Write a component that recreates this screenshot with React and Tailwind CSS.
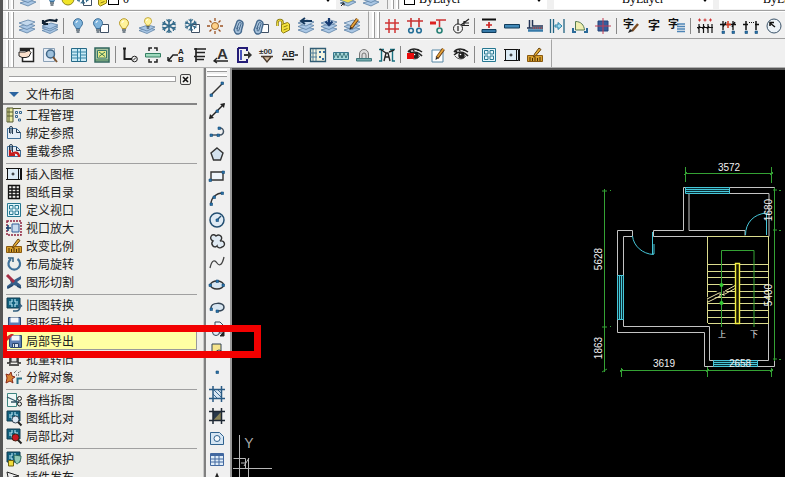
import React from "react";

const sheet = (y, f = "#a9c6e4") => (
  <path d={`M0 ${y} L9 ${y - 3} L16 ${y - 1} L8 ${y + 3}Z`} fill={f} stroke="#5d82a6" strokeWidth=".8" />
);
const sheets = (
  <>
    {sheet(12)}
    {sheet(8.5)}
    {sheet(5, "#c3d8ec")}
  </>
);
const lowSheets = (
  <>
    {sheet(12.5)}
    {sheet(10)}
  </>
);
const bulb = (f, s, cx = 8) => (
  <g transform={`translate(${cx - 8} 0)`}>
    <path d="M6 10.5C6 8.5 3.5 8 3.5 5.200a4.500 4.500 0 0 1 9 0C12.500 8 10 8.500 10 10.500Z" fill={f} stroke={s} />
    <path d="M6 12h4M6.500 14h3" stroke="#52616e" strokeWidth="1.6" />
    <path d="M6 5a2 2 0 0 1 2-2" stroke="#fff" />
  </g>
);
const page = <path d="M7.500 6.500h8v8h-8z" fill="#fff" stroke="#3f5064" />;
const flake = (
  <g stroke="#336a8a" strokeWidth="1.500">
    <path d="M8 1v14M1.500 4.500l13 7M1.500 11.500l13-7" />
    <path d="M5.500 1.500L8 4l2.500-2.500M5.500 14.500L8 12l2.500 2.500M1 7l3-1-.5-3M15 7l-3-1 .5-3M1 9l3 1-.5 3M15 9l-3 1 .5 3" strokeWidth="1.200" />
  </g>
);
const clipLock = (
  <g stroke="#466a8e">
    <path d="M4 12L7 3.500a3.500 3.500 0 0 1 6 3L11.500 12a3.500 3.500 0 0 1-7 1Z" fill="#a9c3dc" strokeWidth="1.400" />
    <path d="M6.500 11L9 5a1 1 0 0 1 2 1l-2 6a1 1 0 0 1-2 0l1-3" />
  </g>
);
const pen = (
  <g>
    <path d="M7 11L13.500 2" stroke="#6a3c12" strokeWidth="3.400" />
    <path d="M7.500 10L13.500 2" stroke="#e6a53c" strokeWidth="1.700" />
    <path d="M5.500 13l.5-3 2 1.500Z" fill="#222" />
  </g>
);
const eye = (
  <g>
    <path d="M1 5C4 1 10 1 15 5M1 8C5 4 11 4 15 9M2 4l2 1M6 2l1 2M11 2v2" stroke="#222" strokeWidth="1.500" />
    <path d="M2 9c3 4 9 4 11-.5" stroke="#555" />
    <circle cx="8.500" cy="8.500" r="3.200" fill="#222" />
    <circle cx="7.500" cy="7.500" r=".8" fill="#fff" />
  </g>
);
const ruler = (
  <g>
    <path d="M.5 8.500h15v6H.5z" fill="#d9a02c" stroke="#8a5a10" />
    <path d="M3 10v4M5.500 11v3M8 10v4M10.500 11v3M13 10v4" stroke="#4c3006" />
    <path d="M6.500 10l1-3L12 1l2 1.500L9 8.500Z" fill="#e4ad38" stroke="#68430d" />
  </g>
);
const views = (
  <g stroke="#267791">
    <path d="M1.500 1.500h13v13h-13z" fill="#e4f6fb" />
    <path d="M3.500 3.500h3.500v3.500h-3.500zM9 3.500h3.500v3.500H9zM3.500 9h3.500v3.500h-3.500zM9 9h3.500v3.500H9z" />
  </g>
);
const frame = (
  <g>
    <path d="M1.500 2.500h13v11h-13z" fill="#dcebf5" stroke="#111" />
    <path d="M12.500 2.500v11M0 2.500h3M0 13.500h3M15.500 2v12" stroke="#111" />
    <path d="M7 6.500v3M5.500 8h3" stroke="#111" />
  </g>
);
const blueBoard = (
  <g>
    <path d="M1 1h13v10H1z" fill="#10617f" stroke="#123c50" />
    <path d="M3 5h3V2M12 5H9V2M3 7h3v3M12 7H9v3" stroke="#c8f2ff" />
  </g>
);
const node = (x, y) => <path d={`M${x - 1} ${y - 1}h2.500v2.500h-2.500z`} fill="#2773ab" stroke="#174b75" strokeWidth=".6" />;
const cjk = (ch, x, y, s) => (
  <text x={x} y={y} fontSize={s} fill="#111" stroke="none" fontWeight="700" fontFamily="'Noto Sans CJK SC', sans-serif">{ch}</text>
);
const gridHooks = <path d="M4 0v16M12.500 0v16M0 3.500h16M0 12.500h16" strokeWidth="1.500" />;
const disk = (
  <g>
    <path d="M2.500 2.500h12v12h-11l-1-1z" fill="#5c7fb5" stroke="#29466f" />
    <path d="M4.500 2.500h8v5h-8z" fill="#f3f6fa" />
    <path d="M5.500 10.500h6v4h-6z" fill="#dde5ee" stroke="#29466f" />
    <path d="M7.500 11v3" stroke="#29466f" />
  </g>
);
const doc = <path d="M1.500 3.500h9l4 4v6h-13z" fill="#e3edf6" stroke="#3f6f98" />;
const clip = <path d="M3.500 8V3a1.500 1.500 0 0 1 3 0v6M3.500 7a1 1 0 0 0 1.500 1V4M10.500 4v3.500h4" stroke="#233a50" />;

const ART = {
  layers: sheets,
  layerPrev: <>{lowSheets}{sheet(8)}<path d="M1 6c3-5 8-4 13-3l1-2M1 6V2M1 6h5" stroke="#123" strokeWidth="2.200" /></>,
  bulb: bulb("#7fb4dc", "#3c6f99"),
  bulbPage: <>{page}{bulb("#7fb4dc", "#3c6f99", 5)}</>,
  bulbOn: bulb("#fff39a", "#b99b2a"),
  bulbLayers: <>{lowSheets}<g transform="translate(1 -1) scale(.8)">{bulb("#fff39a", "#b99b2a", 10)}</g></>,
  flake,
  flakePage: <>{page}<g transform="scale(.85)">{flake}</g></>,
  sun: <><circle cx="8" cy="8" r="3.500" fill="#ffd28a" stroke="#a0642a" /><path d="M8 0v3M8 13v3M0 8h3M13 8h3M2.500 2.500l2 2M11.500 11.500l2 2M2.500 13.500l2-2M11.500 4.500l2-2" stroke="#9c5325" strokeWidth="1.300" /></>,
  sunFull: <circle cx="8" cy="8" r="6" fill="#f0e428" stroke="#8e861c" />,
  lock: clipLock,
  lockPage: <>{page}<g transform="translate(-3)">{clipLock}</g></>,
  unlock: <g stroke="#8b7b10"><path d="M2.500 8V4.500a2.500 2.500 0 0 1 5 0V8" strokeWidth="2.500" /><path d="M2.500 8V4.500a2.500 2.500 0 0 1 5 0V8" stroke="#f4e23c" /><path d="M6.500 6.500l6-2 2 1.500v6l-6 3-2-1.500Z" fill="#f4e23c" /><path d="M8.500 9l4-1.500M8.500 12l4-1.500" /></g>,
  layerLeft: <>{sheets}<path d="M14 3H4M7 0L3 3l4 3" stroke="#16395e" strokeWidth="2" /></>,
  layerDown: <>{sheets}<path d="M8 0v6M4.500 3.500L8 7l3.500-3.500" stroke="#163a70" strokeWidth="2.200" /></>,
  layerPen: <>{sheets}<g transform="translate(0 -1)">{pen}</g></>,
  layerGold: <>{sheet(12)}{sheet(9, "#f0df5a")}<path d="M1 15l3-3M1.500 12H4v2.500" stroke="#222" /></>,
  hash: <path d="M5 1v14M11 1v14M1 5h14M1 11h14" stroke="#cf3434" strokeWidth="1.500" />,
  axes: <><path d="M0 3h16M4 0v9M12 0v9" stroke="#c83232" strokeWidth="1.600" /><circle cx="4" cy="12.500" r="2.300" stroke="#246f98" strokeWidth="1.600" /><circle cx="12" cy="12.500" r="2.300" stroke="#246f98" strokeWidth="1.600" /></>,
  axisCut: <><path d="M0 5h6" stroke="#d22" strokeWidth="3" /><path d="M9.500 2v7M6 2h10" stroke="#c33" strokeWidth="1.500" /><circle cx="9.500" cy="12.500" r="2.500" stroke="#268075" strokeWidth="1.600" /></>,
  tagLine: <><circle cx="5" cy="10.500" r="4.500" stroke="#222" /><path d="M5 8v5M5 6V1M8 7l8-6M9 7.500h7M11 5h5M11 3v4" stroke="#222" strokeWidth="1.200" /></>,
  wallPlus: <><path d="M1 1.500h14" stroke="#111" strokeWidth="2" /><path d="M8 4v6M5 7h6" stroke="#c22" strokeWidth="1.700" /><path d="M1 11.500h14v3H1z" fill="#367aa9" stroke="#123c5b" /></>,
  wall: <path d="M.5 6.500h15v3.500H.5z" fill="#4289b8" stroke="#123c5b" />,
  wallL: <><path d="M2.500 2v8M5.500 2v6H16M0 10h16" stroke="#235" strokeWidth="1.500" /><path d="M1 12.500h15" stroke="#367aa9" strokeWidth="2.500" /><path d="M6 10h9" stroke="#d44" strokeDasharray="1 1" /></>,
  offset: <g stroke="#2c82a5"><path d="M1.500 1v14M4.500 1v14M15 1v14" stroke="#236482" strokeWidth="1.300" /><path d="M6 7h3V4.500L13 8l-4 3.500V9H6z" fill="#9edcf2" /></g>,
  door: <><path d="M3.500 12V3.500C9 3.500 12 7 12.500 12Z" fill="#f0efb0" stroke="#557b52" /><path d="M1 10v4h3M15 10v4h-3" stroke="#2b6a99" strokeWidth="2" /></>,
  column: <><path d="M3 3h10v10H3z" fill="#355c9c" stroke="#234276" /><path d="M8 0v16M0 8h16" stroke="#c23c55" /></>,
  textPen: <>{cjk("字", 0, 10, 11)}<path d="M9 13l6-7" stroke="#7c4b20" strokeWidth="2.500" /><path d="M5 15l2-4 3 2Z" fill="#222" /></>,
  text: cjk("字", 2, 12, 12),
  textBlock: <>{cjk("字", -1, 10, 11)}<path d="M8 6h8M8 8.500h8M8 11h8M8 13.500h8" stroke="#4e85b6" strokeWidth="1.500" /></>,
  dimA: <><path d="M0 9.500h16M2 6v9M6.500 6v9M11 6v9M15 6v9M1 11l2-3M5.500 11l2-3M10 11l2-3" stroke="#111" strokeWidth="1.200" /><path d="M1 2h3M6.500 2h3M12 2h3M2.500 .5v3M8 .5v3M13.500 .5v3" stroke="#c33" /></>,
  dimB: <><path d="M0 6.500h16M3 3v9M13 3v9M6 4l-3 5M15 4l-3 5" stroke="#111" strokeWidth="1.300" /><path d="M8 3v7M6 6.500h5" stroke="#d43b20" strokeWidth="1.500" />{node(3, 14)}{node(13, 14)}</>,
  dimC: <><path d="M0 6.500h5M12 6.500h4M3 3v9M13 3v9" stroke="#111" strokeWidth="1.500" /><path d="M6 4.500h5" stroke="#111" strokeDasharray="1 1" />{node(3, 14)}{node(13, 14)}</>,
  radius: <><circle cx="8" cy="8" r="7" stroke="#3b5369" fill="#edf3f8" /><path d="M9 9L4 5M4 8V4.500h4" stroke="#111" strokeWidth="1.500" /></>,
  hand: <><path d="M1.500 4V1.500h13v13h-11V11" fill="#fff" stroke="#222" strokeWidth="1.500" /><path d="M0 5h6l4-1.500 2 2-2 4-3 1H3L0 9Z" fill="#fae0cc" stroke="#222" /><path d="M1 3h10" stroke="#222" strokeWidth="2" /></>,
  find: <><path d="M1.500 1.500h11v13h-11z" fill="#e8eff7" stroke="#8aa0b6" /><circle cx="8.500" cy="7" r="4" fill="#9fc1dc" stroke="#3f6687" strokeWidth="1.500" /><path d="M11 10l4 5" stroke="#7b5330" strokeWidth="2" /></>,
  table: <><path d="M.5 1.500h15v13H.5z" fill="#c8eaf5" stroke="#266987" /><path d="M6.500 2v12M9.500 2v12M0 5h16M0 8h6M10 8h6M0 11h16" stroke="#3483a4" /></>,
  viewX: <><path d="M1 1h14v14H1z" fill="#a8c4a1" stroke="#31665d" strokeWidth="1.500" /><path d="M3.500 3.500h9v7.500h-9z" fill="#e6e98a" stroke="#387a6f" /><path d="M5 5l6 4.500M11 5l-6 4.500M1 13h14" stroke="#397b51" /></>,
  leader: <><path d="M2.500 1v11H10M1 1.500h3" stroke="#222" strokeWidth="2" /><circle cx="12.500" cy="12" r="2.800" stroke="#222" /><path d="M11 13.500l3-3" stroke="#222" /></>,
  section: <><path d="M.5 6.500h15v3.500H.5z" fill="#9fd9bd" stroke="#348063" /><path d="M4 4V1h3M12 4V1H9M4 12v3h3M12 12v3H9" stroke="#222" strokeWidth="1.500" /></>,
  tagAB: <><path d="M0 14l5-6h5M0 14v-4M0 14h4" stroke="#222" strokeWidth="1.500" /><text x="10" y="7" fontSize="8" fontWeight="700" fill="#222">A</text><text x="10" y="15" fontSize="8" fontWeight="700" fill="#222">B</text></>,
  comb: <path d="M5 1v14M3 2h12M5 5.500h9M3 9.500h11M5 12.500h8" stroke="#222" strokeWidth="1.700" />,
  letterA: <><text x="4" y="12" fontSize="15" fontWeight="700" fill="#333">A</text><path d="M1 14h14M4 11l-3 3 3 2" stroke="#222" strokeWidth="1.300" /></>,
  exit: <><path d="M2 1h9v3M11 12v3H2V1" stroke="#241c77" strokeWidth="2" /><path d="M5 3v10" stroke="#4a54bb" strokeWidth="2" /><path d="M8 7h4V4l4 4-4 4V9H8Z" fill="#333" /></>,
  level: <><text x="0" y="7" fontSize="8" fontWeight="700" fill="#333">±00</text><path d="M2 9.500h12M4 10l4 5 4-5" stroke="#49392c" fill="#d0b99b" strokeWidth="1.300" /></>,
  abc: <><text x="0" y="10" fontSize="9" fontWeight="700" fill="#222">AB</text><path d="M0 12.500h12M13 8h3" stroke="#222" strokeWidth="1.500" /></>,
  project: <><path d="M.5 1.500h15v13H.5z" fill="#f5f5e0" stroke="#315d75" strokeWidth="1.300" /><path d="M3 2v12M6 2v12M0 6h7M0 10h7" stroke="#4f7d96" /><path d="M9 4h2v2H9zM13 4h2v2h-2zM9 9h2v2H9zM12 11h2v2h-2z" fill="#356b9c" /></>,
  insulation: <><path d="M.5 5.500h15v7H.5z" fill="#a7d7da" stroke="#38778e" /><path d="M1 11l2-5 2 5 2-5 2 5 2-5 2 5 2-5" stroke="#3d777c" /></>,
  arch: <><path d="M3.500 12V7a4.500 4.500 0 0 1 9 0v5Z" fill="#ddd" stroke="#777" /><path d="M6 11V8a2 2 0 0 1 4 0v3" stroke="#777" /><path d="M.5 11.500h15v2.500H.5z" fill="#73a9ac" stroke="#3d777c" /></>,
  archText: <><path d="M0 2.500h5M2.500 2v12H0M11 2.500h5M13.500 2v12H16" stroke="#187080" strokeWidth="1.400" /><path d="M5 14l2-8h2l2 8M6 10h4M1 2l6 4M10 5l5-2" stroke="#222" strokeWidth="1.400" /></>,
  redEye: <>{eye}<path d="M0 6h7v6H0z" fill="#e80a0a" /></>,
  edit: <><path d="M2 3h11v12H2z" fill="#fff" stroke="#5586a4" />{pen}</>,
  eye, views, frame, ruler,
  workbook: <><path d="M1 1h6v14H1z" fill="#e9e9a0" stroke="#555b30" /><path d="M3 1v14M1 5h6M1 9h6M7 1.500h8" stroke="#555b30" /><path d="M9.500 4.500h2v2h-2zM13.500 4.500h2v2h-2zM9.500 8.500h2v2h-2zM12.500 12h2v2h-2z" stroke="#36678f" /></>,
  bind: <>{doc}{clip}</>,
  reload: <>{doc}{clip}<path d="M13 14c0-4-3-6-8-3M4 7v5h5" stroke="#c51c1c" strokeWidth="2.200" /></>,
  sheetGrid: <path d="M2.500 1.500h11v13h-11zM6 1v14M10 1v14M2 5h12M2 8h12M2 11h12" stroke="#111" strokeWidth="1.300" />,
  zoomView: <><path d="M1 1h14v14H1z" stroke="#8e2541" strokeDasharray="2 1" strokeWidth="1.500" /><path d="M6 4h7v8H6z" fill="#c9dcef" stroke="#315d97" /><path d="M0 8h5M2 5v6" stroke="#174476" strokeWidth="1.500" /></>,
  rotate: <><path d="M5 3a5.800 5.800 0 1 0 6.500 0" stroke="#3f719a" strokeWidth="2.200" /><path d="M2 2h5v4" stroke="#315d7e" strokeWidth="1.500" /></>,
  cut: <><path d="M3 3l5 3 7-4v3l-4 3 4 3v3l-7-3-7 4v-3l4-3Z" fill="#365f8a" /><path d="M1 1l7 7" stroke="#a72e45" strokeWidth="3" /><path d="M2 14l5-3M11 12l4 2" stroke="#27496d" strokeWidth="1.500" /></>,
  convert: <>{blueBoard}<path d="M7 14h3c3 0 4-2 4-5M12 9.500l2-2 2 2" stroke="#315d7e" strokeWidth="1.500" /></>,
  disk,
  diskRed: <><g transform="translate(1)">{disk}</g><path d="M0 8V4l5-3h3L1 8Z" fill="#d32727" /></>,
  batch: <><path d="M1 3h3v9H1M15 3h-3v9h3M4 2h8M3 14h10" stroke="#222" strokeWidth="1.500" /><path d="M5 5h6v6H5z" fill="#ddd" stroke="#222" /></>,
  explode: <><path d="M0 5l3 1 2-3 1 4 3 1-3 2 1 4-3-2-4 2 1-5Z" fill="#d98232" stroke="#8a2a1a" /><path d="M11.500 15V9.500H16" stroke="#286e84" strokeWidth="2" /><path d="M8 4l3-3M12 4l3-2M10 6h4" stroke="#333" strokeDasharray="1 1" /></>,
  split: <><path d="M1.500 1.500h9v13h-9z" fill="#eff8f6" stroke="#3c8580" /><path d="M1 5l11 5M5 10h8" stroke="#356" strokeWidth="1.300" /><circle cx="13.500" cy="6.500" r="2" stroke="#222" /><circle cx="13.500" cy="12" r="2" stroke="#222" /></>,
  compare: <>{blueBoard}<circle cx="9.500" cy="9.500" r="3.500" fill="#dbe8f3" stroke="#345" /><path d="M12 12l3.500 3.500" stroke="#222" strokeWidth="2" /></>,
  compareRed: <>{blueBoard}<circle cx="9.500" cy="9.500" r="3.500" fill="#c81823" stroke="#421" /><path d="M12 12l3.500 3.500" stroke="#222" strokeWidth="2" /></>,
  protect: <>{blueBoard}<path d="M8 4l7 1c0 5-2 7-4 8-2-1-3-4-3-9Z" fill="#8fc8b8" stroke="#28665c" /><path d="M2.500 9.500h5v5.500h-5z" fill="#f0dc3c" stroke="#6f6110" /></>,
  plugin: <path d="M1 3l12 4-6 1 7 6-9-5-2 4Z" fill="#eee" stroke="#222" />,
  line: <><path d="M2 14L14 2" stroke="#333" strokeWidth="1.400" />{node(2, 14)}{node(13, 2)}</>,
  ray: <><path d="M1 15L15 1" stroke="#222" strokeWidth="1.400" /><path d="M0 16l1-5 4 4ZM16 0l-5 1 4 4Z" fill="#222" />{node(8, 8)}</>,
  pline: <><path d="M1 11h10a3.500 3.500 0 0 0 0-7" stroke="#456" strokeWidth="1.500" />{node(2, 11)}{node(9, 11)}{node(10, 4)}</>,
  polygon: <path d="M8 2l6 5-2.500 7h-7L2 7Z" fill="#d4e2ee" stroke="#333" strokeWidth="1.400" />,
  rect: <><path d="M2 4h12v8H2z" fill="#eef4fa" stroke="#333" strokeWidth="1.400" />{node(1, 12)}{node(14, 4)}</>,
  arc: <><path d="M2 14C2 8 7 3 14 3" stroke="#333" strokeWidth="1.400" />{node(2, 14)}{node(5, 7)}{node(13, 3)}</>,
  circle: <><circle cx="8" cy="8" r="7" fill="#dfeaf4" stroke="#234f72" strokeWidth="1.500" /><path d="M8 8l4-4" stroke="#234f72" strokeWidth="1.400" />{node(8, 8)}</>,
  cloud: <path d="M4 8C-1 6 3-1 7 3c4-3 8 2 4 5 5-1 6 5 2 6-2 2-5 0-5-1-3 3-7-2-4-5Z" fill="#e0eaf3" stroke="#333" strokeWidth="1.400" />,
  spline: <path d="M1 13C3 4 6 5 8 8s5 3 7-6" stroke="#444" strokeWidth="1.300" />,
  ellipse: <><ellipse cx="8" cy="8" rx="6.500" ry="4" fill="#d7e5f0" stroke="#333" strokeWidth="1.400" />{node(1, 8)}{node(8, 4)}{node(14, 8)}</>,
  ellipseArc: <><path d="M2 9c0-6 13-6 13-1 0 3-3 4-6 4" fill="#d7e5f0" stroke="#345" strokeWidth="1.500" />{node(2, 10)}{node(8, 12)}</>,
  insert: <><path d="M6 1h5l3 3v8H6z" fill="#eef4fa" stroke="#345" /><circle cx="7" cy="11" r="3.500" fill="#dce8f2" stroke="#345" /><path d="M15 11v4h-4Z" fill="#222" stroke="#222" /></>,
  block: <><path d="M3 2h9v9H3z" fill="#f5e38b" stroke="#345" /><circle cx="10" cy="11" r="3" fill="#eee" stroke="#345" /></>,
  point: node(8, 8),
  hatch: <><path d="M4 3.500h8.500v9H4z" fill="#d8e6f2" /><path d="M4 8l5 5M5 4l8 8M9 4l4 4" stroke="#3e6c94" /><g stroke="#285a84">{gridHooks}</g></>,
  gradient: <><path d="M4 3.500h8.500v9H4z" fill="#8b8558" /><path d="M4 3.500h8.500L4 12.500z" fill="#28384a" /><g stroke="#1d2733">{gridHooks}</g></>,
  region: <><path d="M1.500 2.500h9l4 4v8h-13z" fill="#d5e5f3" stroke="#2f628f" /><circle cx="8" cy="8.500" r="3" stroke="#2f628f" fill="#f4f8fc" /></>,
  grid: <><path d="M1.500 2.500h13v12h-13z" fill="#e0edf8" stroke="#4268a0" /><path d="M1.500 4h13" stroke="#4268a0" strokeWidth="2" /><path d="M6 3v11M10 3v11M2 8h12M2 11h12" stroke="#4268a0" /></>,
  mtext: <path d="M3 14L8 2l5 12M5 10h6" stroke="#222" strokeWidth="2" />,
};

const Icon = ({ name }) => (
  <svg viewBox="0 0 16 16" fill="none" aria-hidden="true" className="size-4 shrink-0 overflow-visible">
    {ART[name]}
  </svg>
);

const Tool = ({ name }) => (
  <button type="button" aria-label={name} className="flex min-h-0 min-w-0 flex-1 items-center justify-center">
    <Icon name={name} />
  </button>
);

const Group = ({ className, names }) => (
  <div className={`flex shrink-0 pt-[2px] ${className}`}>
    {names.map((n) => <Tool key={n} name={n} />)}
  </div>
);

const Grip = () => (
  <div className="flex shrink-0 gap-[2px] pr-px pl-[2px]">
    <span className="w-[3px] border-r border-[#999] bg-white" />
    <span className="w-[3px] border-r border-[#999] bg-white" />
  </div>
);

const Sep = () => <span className="mx-[2px] mt-[6px] mb-1 w-[2px] shrink-0 border-l border-[#888]" />;

const Bar = ({ children, end = true }) => (
  <div className={`flex shrink-0 items-stretch border-t border-t-white pl-px ${end ? "border-r border-r-[#a5a5a5] pr-[5px]" : ""}`}>
    <Grip />
    {children}
  </div>
);

const Combo = ({ className, label, value, lead }) => (
  <div className={`flex h-5 shrink-0 items-center self-end bg-white px-1 ${className}`}>
    {lead}
    <select aria-label={label} className="min-w-0 flex-1 appearance-none font-['Liberation_Serif',serif] text-xs leading-4 text-black outline-none">
      <option>{value}</option>
    </select>
    <svg viewBox="0 0 8 5" className="h-[5px] w-2 shrink-0" aria-hidden="true"><path d="M0 0h8L4 5z" /></svg>
  </div>
);

const LineSample = ({ className }) => <span className={`mr-[2px] h-px shrink-0 bg-[#555] ${className}`} />;

const MENU = [
  [["workbook", "工程管理"], ["bind", "绑定参照"], ["reload", "重载参照"]],
  [["frame", "插入图框"], ["sheetGrid", "图纸目录"], ["views", "定义视口"], ["zoomView", "视口放大"], ["ruler", "改变比例"], ["rotate", "布局旋转"], ["cut", "图形切割"]],
  [["convert", "旧图转换"], ["disk", "图形导出"], ["diskRed", "局部导出"], ["batch", "批量转旧"], ["explode", "分解对象"]],
  [["split", "备档拆图"], ["compare", "图纸比对"], ["compareRed", "局部比对"]],
  [["protect", "图纸保护"], ["plugin", "插件发布"]],
];

const DRAW = ["line", "ray", "pline", "polygon", "rect", "arc", "circle", "cloud", "spline", "ellipse", "ellipseArc", "insert", "block", "point", "hatch", "gradient", "region", "grid", "mtext"];

const MenuItem = ({ icon, text }) => {
  const active = text === "局部导出";
  return (
    <button
      type="button"
      className={`flex h-[18px] w-full items-center text-left ${active ? "border-r border-b border-[#999] bg-[#ffffa3]" : ""}`}
    >
      <Icon name={icon} />
      <span className="ml-1">{text}</span>
    </button>
  );
};

const Palette = () => (
  <aside className="relative w-[201px] shrink-0 border-r border-[#c8c8c8] bg-[#eeeeeb] pt-[5px] font-['Noto_Sans_CJK_SC',sans-serif] text-xs leading-[18px] text-[#1c1c1c]">
    <div className="flex h-3 items-center pl-[6px]">
      <div className="h-[6px] w-[167px] border-y border-r border-[#a0a0a0] bg-white" />
      <button type="button" aria-label="关闭" className="ml-1 flex size-[11px] items-center justify-center rounded-xs border border-[#444]">
        <svg viewBox="0 0 7 7" className="size-[7px]" stroke="#111" strokeWidth="1.600" aria-hidden="true"><path d="M1 1l5 5M6 1L1 6" /></svg>
      </button>
    </div>
    <button type="button" className="flex h-5 w-[194px] items-center border-b-2 border-[#858585] pl-[6px] text-left">
      <svg viewBox="0 0 10 5" className="h-[5px] w-[10px]" fill="#2b64a0" aria-hidden="true"><path d="M0 0h10L5 5z" /></svg>
      <span className="ml-[7px]">文件布图</span>
    </button>
    <nav className="pr-[6px] pl-[3px]">
      {MENU.map((items, i) => (
        <div key={i} className={i ? "" : "pt-px"}>
          {i > 0 && <hr className="mt-[3px] mb-px border-[#a0a0a0]" />}
          {items.map(([icon, text]) => <MenuItem key={text} icon={icon} text={text} />)}
        </div>
      ))}
    </nav>
    <div className="pointer-events-none absolute top-[257px] left-0 z-10 h-[33px] w-[258px] border-[7px] border-l-4 border-[#f20000]" />
  </aside>
);

const treads = [264, 271, 277, 284, 291, 297, 303, 310, 317, 323];

const Dim = ({ x, y, children, turn }) => (
  <text x={x} y={y} textAnchor="middle" transform={turn ? `rotate(-90 ${x} ${y})` : undefined}>{children}</text>
);

const FloorPlan = () => (
  <svg
    viewBox="232 70 553 407"
    width="553"
    height="407"
    fill="none"
    className="shrink-0 font-['Liberation_Sans',sans-serif] text-[10px]"
  >
    <g stroke="#c4c4c4">
      <path d="M632.500 236v-5.500h-15v102h87v34h70v-179h-91v43h-30v6h115.500V193.500h-80v37h56v5" />
      <path d="M632.500 236.500h-9v90h86v34h59v-124" />
    </g>
    <g stroke="#46c6d8" fill="#082c33">
      <path d="M685.500 187.500h44v6h-44zM686 189.500h43M686 191.500h43" />
      <path d="M617.500 275.500h6v44h-6zM619.500 276v43M621.500 276v43" />
      <path d="M713.500 360.500h44v6h-44zM714 362.500h43M714 364.500h43" />
    </g>
    <path d="M632.500 236c1 10 10 18 21 18.500M652.500 232v22h1.500v-10M745.500 235c0-12 8-21 21-22M766.500 213v22" stroke="#46c6d8" />
    <g stroke="#dcdc8e">
      <path d="M707.500 323V236.500h61V323" />
      {treads.map((y) => <path key={y} d={`M708 ${y + 0.5}h61`} />)}
    </g>
    <path d="M707 297.500l13-8h4l12-7v4l-12 6-16 9Z" fill="#000" />
    <path d="M707 299l12-6M708 302l12-6M725 291l11-6M725 294l11-6M720 292v5M724 291v5M720 294.500h4" stroke="#eee6a8" />
    <g stroke="#34a234">
      <path d="M721.500 327V250.500h32.500V327" />
      <path d="M685 173.500h88M685.500 167v15M771.500 167v16M684 175l3-3M770 175l3-3" />
      <path d="M604.500 189v183M602 191h5M602 327h5M602 372l5-3M610 190.500h1M610 326.500h1" />
      <path d="M774.500 188v173M773 190h4M773 230h4M779 190.500h2M779 230.500h2M773 359h4M779 359.500h2" />
      <path d="M620 370.500h153M621.500 368v9M707.500 367v10M771.500 368v9M620 372l3-3M706 372l3-3M770 372l3-3" />
    </g>
    <circle cx="721.500" cy="285" r="2" fill="#34c834" />
    <circle cx="721.500" cy="303" r="2" fill="#34c834" />
    <path d="M735.500 263.500h4v60h-4z" stroke="#f4ee40" strokeWidth="1.400" fill="#1c1a00" />
    <g fill="#f0f0f0">
      <Dim x={729} y={171}>3572</Dim>
      <Dim x={664} y={367}>3619</Dim>
      <Dim x={740} y={367}>2658</Dim>
      <Dim turn x={602} y={259}>5628</Dim>
      <Dim turn x={602} y={348}>1863</Dim>
      <Dim turn x={772} y={210}>1680</Dim>
      <Dim turn x={772} y={295}>5400</Dim>
      <g className="font-['Noto_Sans_CJK_SC',sans-serif] text-[8px]">
        <Dim x={722} y={337}>上</Dim>
        <Dim x={754} y={337}>下</Dim>
      </g>
    </g>
    <g stroke="#b8b8b8">
      <path d="M239.500 435v42M233 468.500h39M233.500 458.500h12v10M248.500 458v19M244 466l5-8M241 463h5" />
    </g>
    <text x="249" y="448" textAnchor="middle" fill="#aaa" className="text-[14px]">Y</text>
  </svg>
);

export default function App() {
  return (
    <main className="flex h-screen w-full flex-col overflow-hidden border-l-[3px] border-[#555] bg-[#f0f0f0] font-['Liberation_Sans',sans-serif]">
      <div className="flex h-[11px] shrink-0 items-end overflow-hidden border-b border-[#a0a0a0]">
        <div className="flex h-6 shrink-0 items-stretch pb-px">
          <Bar>
            <Group className="w-[25px]" names={["layers"]} />
            <Combo
              className="w-[296px]"
              label="图层"
              value="0"
              lead={
                <span className="mr-1 flex shrink-0 items-center">
                  <Icon name="bulb" /><Icon name="sunFull" /><Icon name="flakePage" /><Icon name="unlock" />
                  <i className="size-[11px] border border-black" />
                </span>
              }
            />
            <Group className="w-[46px]" names={["layerGold", "layers"]} />
          </Bar>
          <Bar end={false}>
            <Combo className="w-[147px]" label="颜色" value="ByLayer" lead={<i className="mr-1 size-[11px] border border-black" />} />
            <span className="w-[7px]" />
            <Combo className="w-[159px]" label="线型" value="ByLayer" lead={<LineSample className="w-[62px]" />} />
            <span className="w-[6px]" />
            <Combo className="w-[159px]" label="线宽" value="ByLayer" lead={<LineSample className="w-[38px]" />} />
          </Bar>
        </div>
      </div>

      <div className="flex h-7 shrink-0 overflow-hidden border-b border-[#a0a0a0]">
        <Bar>
          <Group className="w-[46px]" names={["layers", "layerPrev"]} />
          <Sep />
          <Group className="w-[296px]" names={["bulb", "bulbPage", "bulbOn", "bulbLayers", "flake", "flakePage", "sun", "lock", "lockPage", "unlock", "layerLeft", "layerDown", "layerPen"]} />
        </Bar>
        <Bar end={false}>
          <Group className="w-[91px]" names={["hash", "axes", "axisCut", "tagLine"]} />
          <Sep />
          <Group className="w-[136px]" names={["wallPlus", "wall", "wallL", "offset", "door", "column"]} />
          <Sep />
          <Group className="w-[68px]" names={["textPen", "text", "textBlock"]} />
          <Sep />
          <Group className="w-[91px]" names={["dimA", "dimB", "dimC", "radius"]} />
        </Bar>
      </div>

      <div className="flex h-[29px] shrink-0 border-b border-[#b0b0b0]">
        <Bar>
          <Group className="w-[46px]" names={["hand", "find"]} />
          <Sep />
          <Group className="w-[46px]" names={["table", "viewX"]} />
          <Sep />
          <Group className="w-[182px]" names={["leader", "section", "tagAB", "comb", "letterA", "exit", "level", "abc"]} />
          <Sep />
          <Group className="w-[91px]" names={["project", "insulation", "arch", "archText"]} />
          <Sep />
          <Group className="w-[68px]" names={["redEye", "edit", "eye"]} />
          <Sep />
          <Group className="w-[68px]" names={["views", "frame", "ruler"]} />
        </Bar>
      </div>

      <div className="flex min-h-0 flex-1">
        <Palette />
        <div className="flex w-7 shrink-0 flex-col overflow-hidden border-r-2 border-l-2 border-r-[#9a9a9a] border-l-[#808080] bg-[#f0f0f0] pr-[2px]">
          <div className="flex shrink-0 flex-col gap-[2px] px-px pt-px pb-px">
            <span className="h-[3px] border-b border-[#999] bg-white" />
            <span className="h-[3px] border-b border-[#999] bg-white" />
          </div>
          <div className="flex h-[414px] shrink-0 flex-col">
            {DRAW.map((n) => <Tool key={n} name={n} />)}
          </div>
        </div>
        <div className="min-w-0 flex-1 overflow-hidden border-t-2 border-[#555] bg-black">
          <FloorPlan />
        </div>
      </div>
    </main>
  );
}
